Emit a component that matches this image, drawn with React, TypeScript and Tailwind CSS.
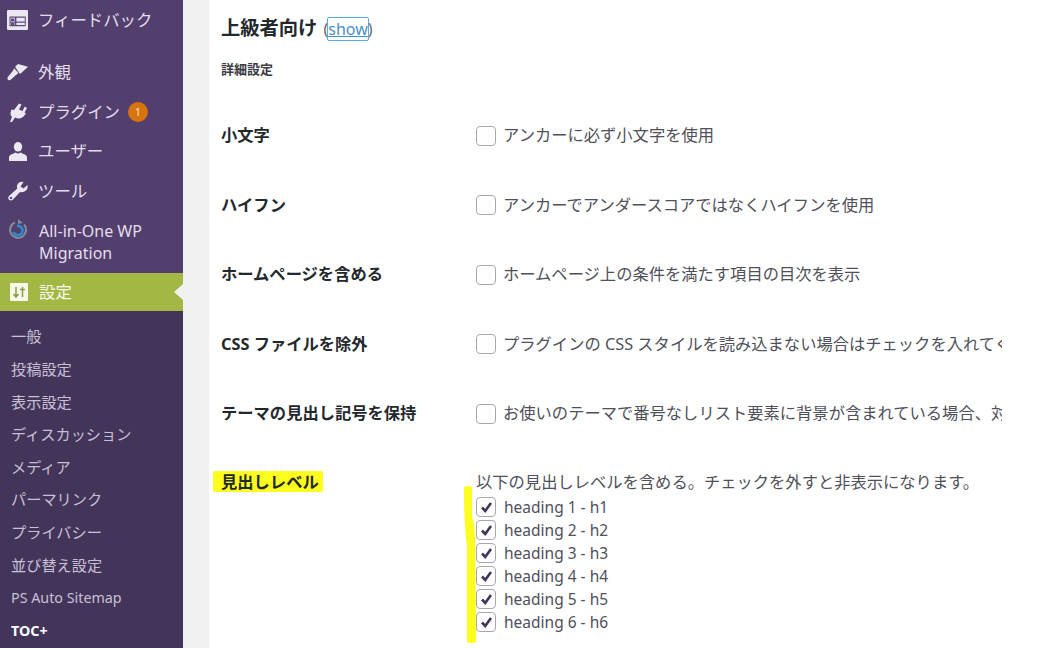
import React from 'react';

const font = { fontFamily: '"Noto Sans", "Noto Sans CJK JP", sans-serif' };

const FeedbackIcon = () => (
  <svg className="w-[21px] h-[20px]" viewBox="0 0 21 20">
    <rect width="21" height="20" rx="1" fill="#ece8f1" />
    <path d="M2.5 6.5h16v1.2h-16z M2.5 11.5h16v1.2h-16z M2.5 6.5h1v9h-1z M8 6.5h1.4v9H8z M2.5 15h16v1.2h-16z M17.8 6.5h1v9h-1z" fill="#5d4a78" />
    <path d="M4 8.5h3.5v2.5H4z M4 13h3.5v2H4z" fill="#5d4a78" />
  </svg>
);

const BrushIcon = () => (
  <svg className="w-[22px] h-[18px]" viewBox="0 0 22 18" fill="#ece8f1">
    <path d="M8.5 3.5 L11.5 0.5 L22 3.5 L15.5 9.5 L13.5 11 Z" />
    <path d="M7.5 5 L12 10 L10 11.5 L4.5 16.5 Q2.5 18.3 1 17 Q-0.4 15.4 1.5 13.5 L6 8 Z" />
  </svg>
);

const PluginIcon = () => (
  <svg className="w-[18px] h-[19px]" viewBox="0 0 18 19" fill="#ece8f1">
    <path d="M10 0.5 L12.5 1.5 L10 6.5 L13.5 8 L15.8 3.5 L18 5 L15.5 9.5 L17 10.5 L14.5 13.5 Q11.5 16.5 7.5 15 L6 14.5 L3 19 L1 19 L3 14 Q1 12 1.5 9.5 L2.5 6.5 L5 7 Z" />
  </svg>
);

const UserIcon = () => (
  <svg className="w-[18px] h-[19px]" viewBox="0 0 18 19" fill="#ece8f1">
    <ellipse cx="9" cy="4.8" rx="4.2" ry="4.8" />
    <path d="M0 19 V15.5 Q0 13 3.5 12 L6.5 10.5 Q9 12.5 11.5 10.5 L14.5 12 Q18 13 18 15.5 V19 Z" />
  </svg>
);

const WrenchIcon = () => (
  <svg className="w-[20px] h-[20px]" viewBox="0 0 20 20">
    <path fill="#ece8f1" fillRule="evenodd" d="M19.5 4 L15.5 7.5 L12.5 5.5 L15.5 1 Q12 0 10 2.5 Q8.3 4.8 9.3 7.5 L1 15 Q-0.5 17 1 18.8 Q2.8 20.3 5 18.5 L12 11 Q15.5 11.8 18 9.5 Q20.3 7.2 19.5 4 Z M3 15.8 a1.2 1.2 0 1 0 0.01 0 Z" />
  </svg>
);

const MigrationIcon = () => (
  <svg className="w-[20px] h-[21px]" viewBox="0 0 20 21" fill="none">
    <path d="M7 3.5 A8 8 0 1 0 16 5.5" stroke="#7f8a99" strokeWidth="2.2" />
    <path d="M15 4 L10 0 L10 5 Z" fill="#7f8a99" />
    <path d="M9 7 A4.6 4.6 0 1 1 5.6 13" stroke="#2e8bd2" strokeWidth="2.6" />
  </svg>
);

const SettingsIcon = () => (
  <svg className="w-[18px] h-[18px]" viewBox="0 0 18 18">
    <rect width="18" height="18" rx="1" fill="#f7f9ea" />
    <path d="M6 4v10 M3.5 11 L6 14 L8.5 11 M12.5 4v10 M10 6.5h5" stroke="#8d9c48" strokeWidth="1.5" fill="none" />
  </svg>
);

const mainItems: { label: string; icon: React.ReactNode; height: string; badge?: boolean }[] = [
  { label: '外観', icon: <BrushIcon />, height: 'h-[40px]' },
  { label: 'プラグイン', icon: <PluginIcon />, height: 'h-[40px]', badge: true },
  { label: 'ユーザー', icon: <UserIcon />, height: 'h-[39px]' },
  { label: 'ツール', icon: <WrenchIcon />, height: 'h-[40px]' },
];

const subItems = ['一般', '投稿設定', '表示設定', 'ディスカッション', 'メディア', 'パーマリンク', 'プライバシー', '並び替え設定'];

const Sidebar = () => (
  <div className="w-[183px] h-[648px] shrink-0 overflow-hidden bg-[#523f6d] text-[#e4deec] text-[16.4px]">
    <div className="h-[52px] pb-[12px] flex items-center pl-[7px] gap-[10px]">
      <FeedbackIcon />
      <span>フィードバック</span>
    </div>
    {mainItems.map((item) => (
      <div key={item.label} className={`${item.height} flex items-center pl-[7px] gap-[10px]`}>
        <span className="w-[21px] flex justify-center">{item.icon}</span>
        <span className="flex items-center gap-[8px]">
          {item.label}
          {item.badge && (
            <span className="w-[20px] h-[20px] rounded-full bg-[#d9730d] text-[#f5e6d5] text-[11px] flex items-center justify-center">1</span>
          )}
        </span>
      </div>
    ))}
    <div className="h-[62px] flex items-center pl-[7px] gap-[11px]">
      <span className="w-[21px] flex justify-center self-start pt-[8px]"><MigrationIcon /></span>
      <span className="text-[16px] leading-[22px]">All-in-One WP<br />Migration</span>
    </div>
    <div className="relative h-[38px] bg-[#a3b745] flex items-center pl-[10px] gap-[11px] text-[#f7f9ea]">
      <SettingsIcon />
      <span>設定</span>
      <span className="absolute right-0 top-[11px] w-0 h-0 border-y-[8px] border-y-transparent border-r-[9px] border-r-[#f1f1f1]" />
    </div>
    <div className="bg-[#43345a] h-[338px] pt-[9.6px] text-[15.2px] text-[#c9c0d6]">
      {subItems.map((s) => (
        <div key={s} className="h-[32.6px] flex items-center pl-[11px]">{s}</div>
      ))}
      <div className="h-[32.6px] flex items-center pl-[11px] text-[14.3px]">PS Auto Sitemap</div>
      <div className="h-[32.6px] flex items-center pl-[11px] text-[14.3px] font-bold text-white">TOC+</div>
    </div>
  </div>
);

const rows = [
  { label: '小文字', text: 'アンカーに必ず小文字を使用' },
  { label: 'ハイフン', text: 'アンカーでアンダースコアではなくハイフンを使用' },
  { label: 'ホームページを含める', text: 'ホームページ上の条件を満たす項目の目次を表示' },
  { label: 'CSS ファイルを除外', text: 'プラグインの CSS スタイルを読み込まない場合はチェックを入れてください。' },
  { label: 'テーマの見出し記号を保持', text: 'お使いのテーマで番号なしリスト要素に背景が含まれている場合、対応するためにチェックを入れます。' },
];

const Box = ({ checked }: { checked?: boolean }) => (
  <span className="shrink-0 w-[20px] h-[20px] rounded-[4px] border border-[#a9a6b0] bg-white flex items-center justify-center">
    {checked && (
      <svg className="w-[13px] h-[13px]" viewBox="0 0 13 13" fill="none">
        <path d="M2 6.5 L5.2 10 L11 2" stroke="#43345a" strokeWidth="2.6" />
      </svg>
    )}
  </span>
);

const headings = [1, 2, 3, 4, 5, 6];

const Content = () => (
  <div className="relative w-[828px] h-[648px] shrink-0 overflow-hidden bg-white pl-[12px] text-[#50505a]">
    <div className="h-[56px] flex items-center gap-[6px] pt-[1px]">
      <span className="text-[19.3px] font-bold text-[#23282d]">上級者向け</span>
      <span className="text-[16px] text-[#666]">
        (<a className="text-[#4a90c8] underline outline outline-[1.5px] outline-[#5aa9e0] rounded-[1px]">show</a>)
      </span>
    </div>
    <div className="h-[28px] flex items-center text-[13px] font-bold text-[#3c3c44]">詳細設定</div>
    <div className="h-[16.8px]" />
    {rows.map((r) => (
      <div key={r.label} className="h-[69.5px] flex items-center">
        <div className="w-[255px] shrink-0 text-[16.3px] font-bold text-[#23282d]">{r.label}</div>
        <div className="w-[526px] flex items-center gap-[7px] overflow-hidden text-[16.3px] whitespace-nowrap">
          <Box />
          <span>{r.text}</span>
        </div>
      </div>
    ))}
    <div className="flex pt-[21.6px]">
      <div className="relative w-[255px] shrink-0 text-[16.3px] font-bold text-[#23282d] leading-[24px] h-[24px]">
        <span className="absolute left-[-8px] top-[1px] w-[110px] h-[21px] bg-[#fdfd1e] rounded-[2px]" />
        <span className="relative">見出しレベル</span>
      </div>
      <div className="relative text-[16.3px]">
        <div className="leading-[24px] h-[24px] whitespace-nowrap">以下の見出しレベルを含める。チェックを外すと非表示になります。</div>
        <svg className="absolute left-[-13px] top-[16px] w-[14px] h-[158px]" viewBox="0 0 14 158">
          <path d="M1 2 Q1 0 4 0 L9 1 L9 30 Q12 40 12 50 L13 156 Q9 158 4 156 L4 60 Q1 40 1 2 Z" fill="#fdfd1e" />
        </svg>
        <div className="flex flex-col pt-[2px]">
          {headings.map((n) => (
            <div key={n} className="h-[23px] flex items-center gap-[8px] text-[15.5px]">
              <Box checked />
              <span>heading {n} - h{n}</span>
            </div>
          ))}
        </div>
      </div>
    </div>
  </div>
);

export default function App() {
  return (
    <div className="flex w-[1037px] h-[648px] overflow-hidden bg-white" style={font}>
      <Sidebar />
      <div className="w-[26px] shrink-0 bg-[#f1f1f1]" />
      <Content />
    </div>
  );
}
